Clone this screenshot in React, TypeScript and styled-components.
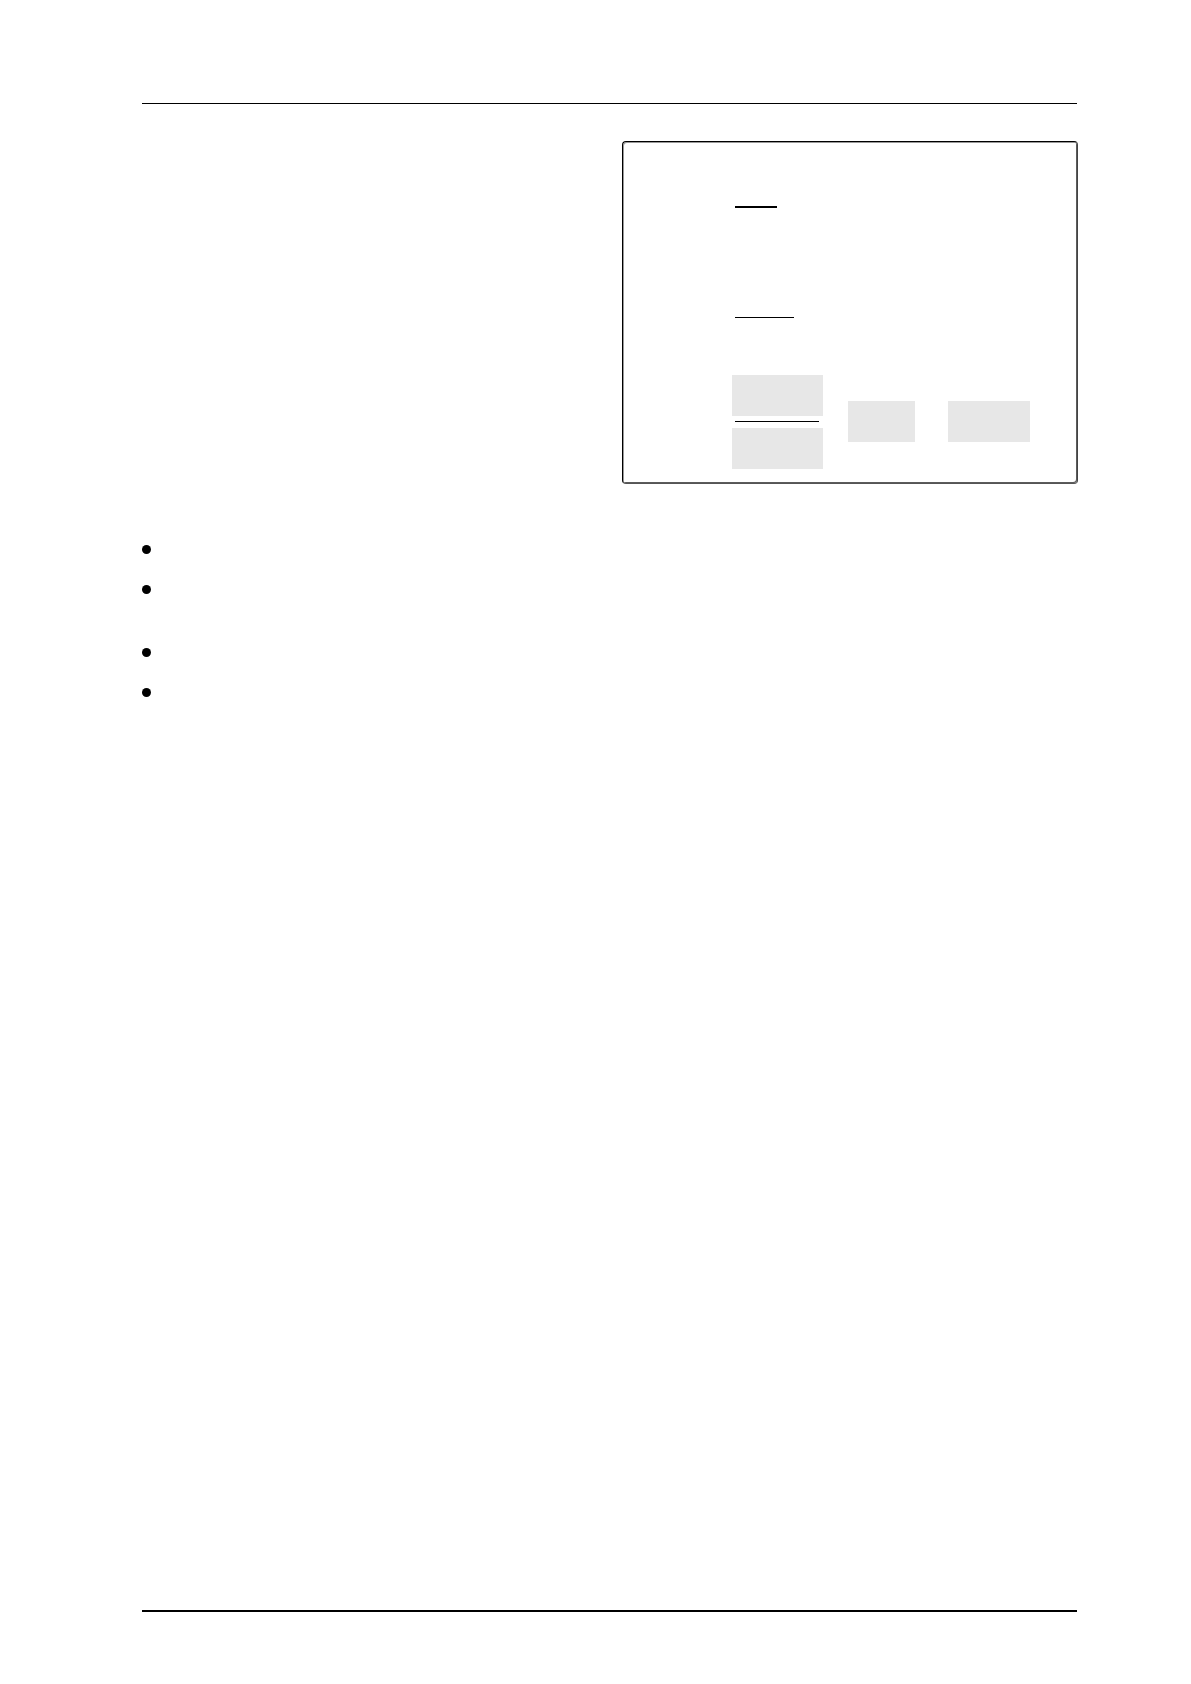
import React from "react";
import styled, { createGlobalStyle } from "styled-components";

const GlobalStyle = createGlobalStyle`
  *, *::before, *::after { box-sizing: border-box; }
  body {
    margin: 0;
    background: #fff;
    color: #000;
    font-family: "Liberation Sans", Arial, sans-serif;
  }
`;

const Page = styled.div`
  display: flex;
  flex-direction: column;
  min-height: 100vh;
  padding: 103px 113px 72px 142px;
`;

const Rule = styled.hr<{ $weight: number }>`
  flex: none;
  align-self: stretch;
  height: ${({ $weight }) => $weight}px;
  margin: 0 1px 0 0;
  border: 0;
  background: #000;
`;

const Content = styled.main`
  display: flex;
  flex: 1;
  flex-direction: column;
  gap: 61px;
  padding-top: 37px;
`;

const ExampleBox = styled.section`
  display: flex;
  flex-direction: column;
  align-self: flex-end;
  width: 100%;
  max-width: 456px;
  padding: 64px 47px 14px 109px;
  border: 1px solid #000;
  border-right-color: #444;
  border-bottom-color: #555;
  border-radius: 4px;
  box-shadow: inset 1px 1px 0 #999, inset -1px -1px 0 #5c5c5c;
`;

const Bar = styled.div<{ $width: number; $weight: number }>`
  width: ${({ $width }) => $width}px;
  height: ${({ $weight }) => $weight}px;
  margin: 0 0 1px 3px;
  background: #000;
`;

const Underlines = styled.div`
  display: flex;
  flex-direction: column;
  gap: 108px;
`;

const Equation = styled.div`
  display: flex;
  align-items: flex-start;
  justify-content: space-between;
  margin-top: 56px;
`;

const Fraction = styled.div`
  display: flex;
  flex-direction: column;
  gap: 5px;
`;

const Terms = styled.div`
  display: flex;
  gap: 33px;
  padding-top: 26px;
`;

const Field = styled.div<{ $width: number }>`
  width: ${({ $width }) => $width}px;
  height: 41px;
  background: #e7e7e7;
`;

const Points = styled.ul`
  display: flex;
  flex-direction: column;
  gap: 31px;
  margin: 0;
  padding: 0;
  list-style: none;
`;

const Point = styled.li<{ $tall?: boolean }>`
  height: ${({ $tall }) => ($tall ? 32 : 9)}px;

  &::before {
    content: "";
    display: block;
    width: 9px;
    height: 9px;
    border-radius: 50%;
    background: #000;
  }
`;

export default function App() {
  return (
    <>
      <GlobalStyle />
      <Page>
        <Rule $weight={1} />
        <Content>
          <ExampleBox>
            <Underlines>
              <Bar $width={42} $weight={2} />
              <Bar $width={59} $weight={1} />
            </Underlines>
            <Equation>
              <Fraction>
                <Field $width={91} />
                <Bar $width={84} $weight={1} />
                <Field $width={91} />
              </Fraction>
              <Terms>
                <Field $width={67} />
                <Field $width={82} />
              </Terms>
            </Equation>
          </ExampleBox>
          <Points>
            <Point />
            <Point $tall />
            <Point />
            <Point />
          </Points>
        </Content>
        <Rule $weight={2} />
      </Page>
    </>
  );
}
